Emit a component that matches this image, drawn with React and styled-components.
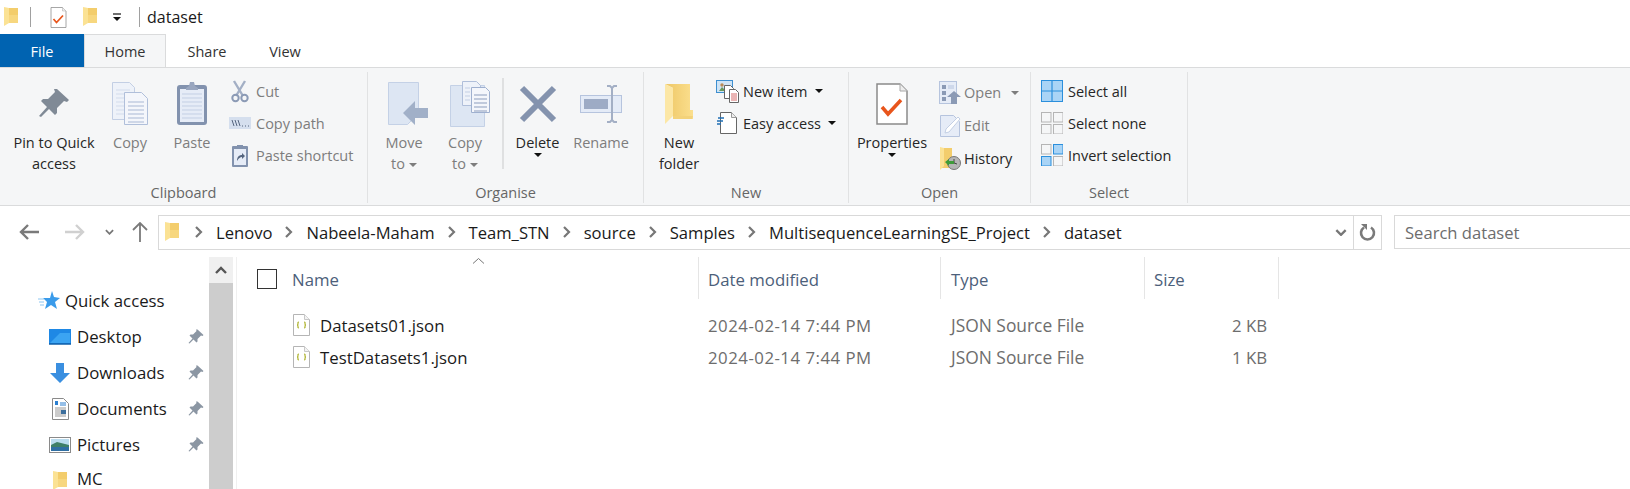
import React from "react"
import styled, { createGlobalStyle } from "styled-components"

const Global = createGlobalStyle`
  html, body { margin: 0; padding: 0; background: #fff; }
  body { font-family: "Open Sans", "Noto Sans", sans-serif; color: #1a1a1a; }
`

const Page = styled.div`
  width: 1630px;
  height: 489px;
  overflow: hidden;
  display: flex;
  flex-direction: column;
`

/* title bar */
const TitleBar = styled.div`
  height: 34px;
  display: flex;
  align-items: center;
  padding-left: 4px;
  svg { flex: none; }
`
const TitleSep = styled.span`
  width: 1px;
  height: 20px;
  background: #a0a0a0;
  margin: 0 ${(p) => p.$right}px 0 ${(p) => p.$left}px;
`
const TitleText = styled.span`
  font-size: 16px;
  color: #1a1a1a;
`
const QuickSlot = styled.span`
  display: flex;
  margin-right: ${(p) => p.$right}px;
`
const Spacer = styled.span`
  flex: none;
  width: ${(p) => p.$w}px;
`

/* tabs */
const TabRow = styled.div`
  height: 34px;
  display: flex;
  box-sizing: border-box;
`
const Tab = styled.div`
  width: ${(p) => p.$w}px;
  box-sizing: border-box;
  display: flex;
  align-items: center;
  justify-content: center;
  font-size: 14.5px;
  color: #333;
`
const FileTab = styled(Tab)`
  background: #0063b1;
  color: #fff;
`
const ActiveTab = styled(Tab)`
  background: #f5f6f7;
  border: 1px solid #dadbdc;
  border-bottom: none;
`

/* ribbon */
const Ribbon = styled.div`
  height: 139px;
  box-sizing: border-box;
  flex: none;
  display: flex;
  background: #f5f6f7;
  border-top: 1px solid #dadbdc;
  border-bottom: 1px solid #dadbdc;
  margin-top: -1px;
`
const RibbonSep = styled.div`
  width: 1px;
  background: #e1e2e3;
  margin: 4px 0 2px;
`
const Group = styled.div`
  width: ${(p) => p.$w}px;
  display: flex;
  flex-direction: column;
`
const GroupBody = styled.div`
  height: 106px;
  box-sizing: content-box;
  padding: 7px 0 0 ${(p) => p.$pad || 0}px;
  margin-bottom: -1px;
  display: flex;
`
const GroupLabel = styled.div`
  font-size: 14.5px;
  line-height: 20px;
  margin-top: 3px;
  text-align: center;
  color: #666;
`
const LargeButton = styled.div`
  width: ${(p) => p.$w}px;
  flex: none;
  display: flex;
  flex-direction: column;
  align-items: center;
  font-size: 14.5px;
  line-height: 21px;
  color: ${(p) => (p.$off ? "#7d7d7d" : "#262626")};
`
const LargeIcon = styled.div`
  height: 57px;
  display: flex;
  align-items: center;
  justify-content: center;
`
const Caret = styled.span`
  display: inline-block;
  width: 0;
  height: 0;
  border-left: 4px solid transparent;
  border-right: 4px solid transparent;
  border-top: 4px solid ${(p) => (p.$off ? "#7d7d7d" : "#111")};
  vertical-align: middle;
  margin-left: ${(p) => p.$ml || 0}px;
`
const InnerSep = styled.div`
  width: 2px;
  height: 91px;
  margin-top: 3px;
  flex: none;
  background: #dfe0e1;
`
const SmallColumn = styled.div`
  display: flex;
  flex-direction: column;
  margin-left: ${(p) => p.$ml || 0}px;
  margin-top: ${(p) => p.$mt || 0}px;
`
const SmallButton = styled.div`
  height: ${(p) => p.$h || 32}px;
  display: flex;
  align-items: center;
  gap: ${(p) => p.$gap ?? 4}px;
  font-size: 14.5px;
  white-space: nowrap;
  color: ${(p) => (p.$off ? "#7d7d7d" : "#262626")};
`
const SmallIcon = styled.span`
  width: 24px;
  display: flex;
  justify-content: center;
`

/* address row */
const AddressRow = styled.div`
  height: 51px;
  flex: none;
  display: flex;
  align-items: center;
  padding-top: 1px;
  box-sizing: border-box;
`
const NavButtons = styled.div`
  width: 158px;
  flex: none;
  display: flex;
  align-items: center;
  padding-left: 19px;
  box-sizing: border-box;
`
const AddressBox = styled.div`
  width: 1224px;
  height: 35px;
  box-sizing: border-box;
  border: 1px solid #d9d9d9;
  display: flex;
  align-items: center;
  padding-left: 6px;
`
const Crumbs = styled.div`
  flex: 1;
  display: flex;
  align-items: center;
  gap: 12px;
  font-size: 16.6px;
  color: #1a1a1a;
  white-space: nowrap;
`
const AddressEnd = styled.div`
  width: 27px;
  height: 100%;
  display: flex;
  align-items: center;
  justify-content: center;
  border-left: 1px solid #d9d9d9;
`
const SearchBox = styled.div`
  margin-left: 12px;
  flex: 1;
  height: 34px;
  box-sizing: border-box;
  border: 1px solid #d9d9d9;
  border-right: none;
  display: flex;
  align-items: center;
  padding-left: 10px;
  font-size: 16.6px;
  color: #6d6d6d;
`

/* content */
const Main = styled.div`
  flex: 1;
  display: flex;
  min-height: 0;
`
const Nav = styled.div`
  width: 209px;
  flex: none;
  padding-top: 26px;
  box-sizing: border-box;
`
const NavRow = styled.div`
  height: 36px;
  display: flex;
  align-items: center;
  padding-left: ${(p) => p.$indent}px;
  font-size: 16.8px;
  line-height: 16px;
  color: #1a1a1a;
`
const NavLastRow = styled(NavRow)`
  height: 24px;
  align-items: flex-start;
  padding-top: 8px;
  box-sizing: border-box;
`
const NavIcon = styled.span`
  width: 22px;
  display: flex;
  justify-content: center;
  margin-right: ${(p) => p.$gap}px;
`
const NavPin = styled.span`
  margin-left: auto;
  margin-right: 5px;
  display: flex;
`
const ScrollBar = styled.div`
  width: 24px;
  flex: none;
  display: flex;
  flex-direction: column;
  margin-right: 3px;
`
const ScrollUp = styled.div`
  height: 26px;
  background: #f0f0f0;
  display: flex;
  align-items: center;
  justify-content: center;
`
const ScrollThumb = styled.div`
  flex: 1;
  background: #cdcdcd;
`
const ListPane = styled.div`
  flex: 1;
  border-left: 1px solid #f0f0f0;
`
const ListRow = styled.div`
  display: flex;
  height: ${(p) => p.$h}px;
`
const Rows = styled.div`
  margin-top: 10px;
`
const Cell = styled.div`
  width: ${(p) => p.$w}px;
  flex: none;
  box-sizing: border-box;
  display: flex;
  align-items: center;
  padding-left: 9px;
  font-size: 16.8px;
  white-space: nowrap;
  color: #6d6d6d;
`
const DateCell = styled(Cell)`
  letter-spacing: 0.5px;
`
const TypeCell = styled(Cell)`
  padding-left: 10px;
  font-size: 17.4px;
`
const HeadCell = styled(Cell)`
  position: relative;
  padding-top: 2px;
  color: #4c607a;
  border-right: 1px solid #e5e5e5;
`
const TypeHead = styled(HeadCell)`
  padding-left: 10px;
`
const NameHead = styled(HeadCell)`
  padding-left: 20px;
`
const NameCell = styled(Cell)`
  padding-left: 56px;
  gap: 10px;
  color: #1a1a1a;
`
const SizeCell = styled(Cell)`
  justify-content: flex-end;
  padding-right: 12px;
`
const CheckBox = styled.span`
  width: 20px;
  height: 20px;
  box-sizing: border-box;
  border: 1px solid #333;
  margin-right: 15px;
`
const SortMark = styled.svg`
  position: absolute;
  left: 236px;
  top: 1px;
`

/* icons */
const Folder = ({ w = 14, h = 20 }) => (
  <svg width={w} height={h} viewBox="0 0 14 20">
    <path d="M4 1h10v15H4z" fill="#f3cd6c" />
    <path d="M0 0l5 1v15l-5 3z" fill="#fbe294" />
    <path d="M5 8h9v8H5z" fill="#f7d77f" />
  </svg>
)
const BigFolder = () => (
  <svg width="30" height="42" viewBox="0 0 30 42">
    <defs>
      <linearGradient id="bf" x1="0" y1="0" x2="1" y2="0">
        <stop offset="0" stopColor="#eec766" />
        <stop offset="1" stopColor="#fbdf8e" />
      </linearGradient>
    </defs>
    <path d="M1 1h25v26h3v9H9V5z" fill="url(#bf)" />
    <path d="M1 1l8 4v28l-8 8z" fill="#fce7a6" />
    <path d="M9 33h20l-1 3H9z" fill="#f3d27a" />
  </svg>
)
const CheckDoc = ({ w = 17, h = 21 }) => (
  <svg width={w} height={h} viewBox="0 0 32 42">
    <path d="M1 1h23l7 7v33H1z" fill="#fff" stroke="#8a8a8a" strokeWidth="1.5" />
    <path d="M24 1v7h7" fill="#eee" stroke="#a8a8a8" />
    <path d="M6 24l6 7 13-14" fill="none" stroke="#e8551c" strokeWidth="3.5" />
  </svg>
)
const DropMark = () => (
  <svg width="9" height="9" viewBox="0 0 9 9">
    <path d="M0 1h8" stroke="#111" strokeWidth="1.2" />
    <path d="M0 4h8L4 8z" fill="#111" />
  </svg>
)
const Pin = ({ size = 32, color = "#808a96" }) => (
  <svg width={size} height={size} viewBox="0 0 32 32">
    <path d="M19 1l12 11-2 2-3-1-7 7 0 5-2 2-6-6-8 8-2-1 8-9-6-6 2-2 5 0 7-7-1-3z" fill={color} />
  </svg>
)
const DocLines = ({ x, y, w, n, gap = 4, color = "#b8c6de" }) => (
  <path d={Array.from({ length: n }, (_, i) => `M${x} ${y + i * gap}h${w}`).join("")} stroke={color} strokeWidth="1" />
)
const CopyIcon = () => (
  <svg width="36" height="43" viewBox="0 0 36 43">
    <path d="M.5.5h17l5 5v32H.5z" fill="#eef2f9" stroke="#c3cfe4" />
    <DocLines x={4} y={8} w={14} n={7} color="#d3dcec" />
    <path d="M12.5 10.5h17l6 6v26h-23z" fill="#f4f6fb" stroke="#b0bfda" />
    <DocLines x={16} y={20} w={16} n={6} color="#a9b8d4" />
  </svg>
)
const PasteIcon = () => (
  <svg width="30" height="43" viewBox="0 0 30 43">
    <rect x="0" y="3" width="30" height="40" rx="3" fill="#8292ae" />
    <rect x="3" y="7" width="24" height="33" fill="#e6ecf7" />
    <DocLines x={5} y={12} w={20} n={7} color="#c3cfe4" />
    <path d="M9 6l3-2 1-4h4l1 4 3 2v2H9z" fill="#99a6bf" />
  </svg>
)
const CutIcon = () => (
  <svg width="18" height="23" viewBox="0 0 18 23">
    <path d="M3 1l9 15M14 1L5 16" stroke="#a3afc5" strokeWidth="2.4" />
    <circle cx="4.5" cy="18" r="3.2" fill="none" stroke="#8b9ab5" strokeWidth="2" />
    <circle cx="13.5" cy="18" r="3.2" fill="none" stroke="#8b9ab5" strokeWidth="2" />
  </svg>
)
const CopyPathIcon = () => (
  <svg width="22" height="12" viewBox="0 0 22 12">
    <rect width="22" height="12" fill="#d5dfee" />
    <path d="M3 3l2 6M6 3l2 6M9 3l2 6" stroke="#55657f" strokeWidth="1" />
    <path d="M13 9h1M16 9h1M19 9h1" stroke="#55657f" strokeWidth="1" />
  </svg>
)
const PasteShortcutIcon = () => (
  <svg width="16" height="23" viewBox="0 0 16 23">
    <rect y="2" width="16" height="21" rx="1" fill="#8292ae" />
    <rect x="2" y="5" width="12" height="16" fill="#e6ecf7" />
    <path d="M5 1h6v4H5z" fill="#8292ae" />
    <path d="M5 17c0-4 2-6 5-6V9l3 3-3 3v-2c-2 0-3 1-5 4z" fill="#55657f" />
  </svg>
)
const MoveToIcon = () => (
  <svg width="47" height="44" viewBox="-7 0 47 44">
    <path d="M.5.5h30v31l-11 11H.5z" fill="#dde6f3" stroke="#c4d1e6" />
    <path d="M15 31l12-12v7h13v10H27v7z" fill="#a1b0c8" />
  </svg>
)
const CopyToIcon = () => (
  <svg width="50" height="46" viewBox="-10 0 50 46">
    <path d="M.5 4.5h34v41H.5z" fill="#dde6f3" stroke="#c4d1e6" />
    <path d="M12.5.5h14l4 4v20h-18z" fill="#eef2f9" stroke="#b0bfda" />
    <path d="M21.5 6.5h14l4 4v21h-18z" fill="#f4f6fb" stroke="#9fb0cf" />
    <DocLines x={24} y={14} w={13} n={5} color="#8c9dbd" />
    <DocLines x={15} y={7} w={5} n={4} color="#c3cfe4" />
  </svg>
)
const DeleteIcon = () => (
  <svg width="38" height="38" viewBox="0 0 38 38">
    <path d="M3 3l32 32M35 3L3 35" stroke="#8493ae" strokeWidth="6" />
  </svg>
)
const RenameIcon = () => (
  <svg width="43" height="38" viewBox="0 0 43 38">
    <rect x=".5" y="10.5" width="41" height="17" fill="#e4ebf7" stroke="#b6c4de" />
    <rect x="4" y="14" width="24" height="10" fill="#9dabc5" />
    <path d="M27 1h3l2 2 2-2h3M27 37h3l2-2 2 2h3M32 3v32" fill="none" stroke="#a3afc5" strokeWidth="2" />
  </svg>
)
const NewItemIcon = () => (
  <svg width="23" height="23" viewBox="0 0 23 23">
    <rect x=".5" y=".5" width="16" height="12" fill="#cfe4f6" stroke="#3e8fd0" />
    <path d="M3 11l3-4 4 4z" fill="#6a9a5c" />
    <circle cx="6" cy="5" r="1.7" fill="#b98a55" />
    <path d="M8.5 5.5h6l3 3v10h-9z" fill="#fff" stroke="#666" />
    <path d="M13.5 9.5h6l3 3v10h-9z" fill="#fff" stroke="#666" />
    <DocLines x={15} y={14} w={6} n={4} gap={2} color="#d56a6a" />
  </svg>
)
const EasyAccessIcon = () => (
  <svg width="20" height="22" viewBox="0 0 20 22">
    <path d="M3.5.5h11l5 5v16h-16z" fill="#fff" stroke="#666" />
    <path d="M14.5.5v5h5" fill="#eee" stroke="#999" />
    <path d="M1 6h6M0 9h6M0 12h4" stroke="#1f6fb5" strokeWidth="1.3" />
  </svg>
)
const OpenIcon = () => (
  <svg width="22" height="23" viewBox="0 0 22 23">
    <rect x=".5" y=".5" width="17" height="22" fill="#e6ecf7" stroke="#b6c4de" />
    <path d="M3 4h4v4H3zM3 10h4v4H3zM3 16h4v4H3z" fill="#8b9ab5" />
    <path d="M9 5h6M9 7h6" stroke="#b6c4de" />
    <path d="M15 10l7 6h-4v7h-6v-7H8z" fill="#8b9ab5" />
  </svg>
)
const EditIcon = () => (
  <svg width="21" height="22" viewBox="0 0 21 22">
    <path d="M.5.5h13l6 6v15H.5z" fill="#e6ecf7" stroke="#b6c4de" />
    <path d="M5 18l1-4L18 2l2 2L9 17z" fill="#fff" stroke="#c3cfe4" />
  </svg>
)
const HistoryIcon = () => (
  <svg width="21" height="23" viewBox="0 0 21 23">
    <path d="M2 1h10v20H2z" fill="#f3cd6c" />
    <path d="M0 0l4 1v18l-4 4z" fill="#fbe294" />
    <circle cx="14" cy="16" r="6.5" fill="#b5b5b5" stroke="#777" />
    <path d="M14 12v4l3 1" stroke="#444" fill="none" />
    <path d="M5 15l4-3v2h5v3H9v2z" fill="#3e9b3a" />
  </svg>
)
const GridIcon = ({ on }) => (
  <svg width="22" height="22" viewBox="0 0 22 22">
    {[[0, 0], [12, 0], [0, 12], [12, 12]].map(([x, y], i) => (
      <rect
        key={i}
        x={x + 0.5}
        y={y + 0.5}
        width="9.5"
        height="9.5"
        fill={on[i] ? "#a9d4f6" : "#f5f6f7"}
        stroke={on[i] ? "#2b8fdc" : "#b5b5b5"}
      />
    ))}
  </svg>
)
const SelectAllIcon = () => (
  <svg width="22" height="22" viewBox="0 0 22 22">
    <rect x=".5" y=".5" width="21" height="21" fill="#a9d4f6" stroke="#2b8fdc" />
    <path d="M11 0v22M0 11h22" stroke="#2b8fdc" strokeWidth="1.2" />
  </svg>
)
const BackArrow = () => (
  <svg width="20" height="16" viewBox="0 0 20 16">
    <path d="M9 1L2 8l7 7M2 8h18" fill="none" stroke="#7a7a7a" strokeWidth="2.4" />
  </svg>
)
const ForwardArrow = () => (
  <svg width="20" height="16" viewBox="0 0 20 16">
    <path d="M11 1l7 7-7 7M18 8H0" fill="none" stroke="#d0d0d0" strokeWidth="2.4" />
  </svg>
)
const UpArrow = () => (
  <svg width="16" height="20" viewBox="0 0 16 20">
    <path d="M1 8l7-7 7 7M8 1v19" fill="none" stroke="#7a7a7a" strokeWidth="1.8" />
  </svg>
)
const Chevron = ({ w = 10, h = 6 }) => (
  <svg width={w} height={h} viewBox="0 0 10 6">
    <path d="M1 1l4 4 4-4" fill="none" stroke="#777" strokeWidth="2" />
  </svg>
)
const ChevronUp = () => (
  <svg width="12" height="8" viewBox="0 0 12 8">
    <path d="M1 7l5-5 5 5" fill="none" stroke="#555" strokeWidth="2.4" />
  </svg>
)
const CrumbChevron = () => (
  <svg width="10" height="12" viewBox="0 0 10 12">
    <path d="M2 1l5 5-5 5" fill="none" stroke="#777" strokeWidth="2.2" />
  </svg>
)
const Refresh = () => (
  <svg width="17" height="18" viewBox="0 0 17 18">
    <path d="M5 4.5a6.5 6.5 0 1 0 7 0" fill="none" stroke="#7a7a7a" strokeWidth="2.6" />
    <path d="M2 1h6v6z" fill="#7a7a7a" />
  </svg>
)
const Star = () => (
  <svg width="22" height="20" viewBox="0 0 22 20">
    <path d="M14 0l2 6 6 1-5 4 2 7-6-4-6 4 2-7-4-4h7z" fill="#3a9bea" />
    <path d="M0 8h6M1 11h5M2 14h4" stroke="#8cc6f2" strokeWidth="1" />
  </svg>
)
const Desktop = () => (
  <svg width="22" height="16" viewBox="0 0 22 16">
    <rect width="22" height="15" fill="#1e88e5" />
    <path d="M1 14L11 4h10v10z" fill="#3ba4f2" />
    <path d="M0 15h22" stroke="#0f5fa8" strokeWidth="1.5" />
  </svg>
)
const Downloads = () => (
  <svg width="20" height="20" viewBox="0 0 20 20">
    <path d="M6 0h8v10h6L10 20 0 10h6z" fill="#3a8fe0" />
  </svg>
)
const Documents = () => (
  <svg width="17" height="22" viewBox="0 0 17 22">
    <path d="M.5.5h11l5 5v16H.5z" fill="#fff" stroke="#8a8a8a" />
    <path d="M3 3h3v4H3z" fill="#2b7fd0" />
    <DocLines x={8} y={5} w={6} n={2} gap={2} color="#2b7fd0" />
    <DocLines x={3} y={10} w={11} n={5} gap={2} color="#999" />
    <rect x="9" y="12" width="5" height="4" fill="#3c6e9c" />
  </svg>
)
const Pictures = () => (
  <svg width="22" height="16" viewBox="0 0 22 16">
    <rect x=".5" y=".5" width="21" height="15" fill="#fff" stroke="#8a8a8a" />
    <rect x="2" y="2" width="18" height="6" fill="#b9dcef" />
    <path d="M2 8l6-3 12 3v2H2z" fill="#3e7f68" />
    <rect x="2" y="10" width="18" height="4" fill="#2f6fa3" />
  </svg>
)
const JsonFile = () => (
  <svg width="17" height="22" viewBox="0 0 17 22">
    <path d="M.5.5h11l5 5v16H.5z" fill="#fff" stroke="#b5b5b5" />
    <path d="M11.5.5v5h5" fill="#f3f3f3" stroke="#c8c8c8" />
    <path d="M6 8c-1.5 0-1 1-1 2s-1 1-1 1 1 0 1 1-.5 2 1 2M11 8c1.5 0 1 1 1 2s1 1 1 1-1 0-1 1 .5 2-1 2" fill="none" stroke="#aeb32e" strokeWidth="1.2" />
  </svg>
)

const crumbs = ["Lenovo", "Nabeela-Maham", "Team_STN", "source", "Samples", "MultisequenceLearningSE_Project", "dataset"]

const places = [
  { name: "Desktop", icon: <Desktop /> },
  { name: "Downloads", icon: <Downloads /> },
  { name: "Documents", icon: <Documents /> },
  { name: "Pictures", icon: <Pictures /> },
]

const files = [
  { name: "Datasets01.json", date: "2024-02-14 7:44 PM", type: "JSON Source File", size: "2 KB" },
  { name: "TestDatasets1.json", date: "2024-02-14 7:44 PM", type: "JSON Source File", size: "1 KB" },
]

const Small = ({ icon, off, h, gap, children }) => (
  <SmallButton $off={off} $h={h} $gap={gap}>
    <SmallIcon>{icon}</SmallIcon>
    {children}
  </SmallButton>
)

const Large = ({ w, icon, off, lines, caret }) => (
  <LargeButton $w={w} $off={off}>
    <LargeIcon>{icon}</LargeIcon>
    {lines.map((l) => (
      <div key={l}>{l}</div>
    ))}
    {caret && <Caret />}
  </LargeButton>
)

const App = () => {
  return (
    <Page>
      <Global />
      <TitleBar>
        <QuickSlot $right={0}><Folder /></QuickSlot>
        <TitleSep $left={12} $right={19} />
        <QuickSlot $right={16}><CheckDoc /></QuickSlot>
        <QuickSlot $right={16}><Folder /></QuickSlot>
        <QuickSlot $right={17}><DropMark /></QuickSlot>
        <TitleSep $left={0} $right={7} />
        <TitleText>dataset</TitleText>
      </TitleBar>
      <TabRow>
        <FileTab $w={84}>File</FileTab>
        <ActiveTab $w={82}>Home</ActiveTab>
        <Tab $w={82}>Share</Tab>
        <Tab $w={74}>View</Tab>
      </TabRow>
      <Ribbon>
        <Group $w={367}>
          <GroupBody $pad={8}>
            <Large w={92} icon={<Pin />} lines={["Pin to Quick", "access"]} />
            <Large w={60} off icon={<CopyIcon />} lines={["Copy"]} />
            <Large w={64} off icon={<PasteIcon />} lines={["Paste"]} />
            <SmallColumn $ml={4}>
              <Small off icon={<CutIcon />}>Cut</Small>
              <Small off icon={<CopyPathIcon />}>Copy path</Small>
              <Small off icon={<PasteShortcutIcon />}>Paste shortcut</Small>
            </SmallColumn>
          </GroupBody>
          <GroupLabel>Clipboard</GroupLabel>
        </Group>
        <RibbonSep />
        <Group $w={275}>
          <GroupBody $pad={12}>
            <LargeButton $w={48} $off>
              <LargeIcon><MoveToIcon /></LargeIcon>
              <div>Move</div>
              <div>to<Caret $off $ml={4} /></div>
            </LargeButton>
            <LargeButton $w={74} $off>
              <LargeIcon><CopyToIcon /></LargeIcon>
              <div>Copy</div>
              <div>to<Caret $off $ml={4} /></div>
            </LargeButton>
            <InnerSep />
            <Large w={67} icon={<DeleteIcon />} lines={["Delete"]} caret />
            <Large w={60} off icon={<RenameIcon />} lines={["Rename"]} />
          </GroupBody>
          <GroupLabel>Organise</GroupLabel>
        </Group>
        <RibbonSep />
        <Group $w={204}>
          <GroupBody>
            <Large w={70} icon={<BigFolder />} lines={["New", "folder"]} />
            <SmallColumn $ml={1}>
              <Small icon={<NewItemIcon />}>New item<Caret $ml={4} /></Small>
              <Small icon={<EasyAccessIcon />}>Easy access<Caret $ml={3} /></Small>
            </SmallColumn>
          </GroupBody>
          <GroupLabel>New</GroupLabel>
        </Group>
        <RibbonSep />
        <Group $w={181}>
          <GroupBody>
            <Large w={86} icon={<CheckDoc w={32} h={42} />} lines={["Properties"]} caret />
            <SmallColumn $ml={3} $mt={1}>
              <Small off h={33} gap={2} icon={<OpenIcon />}>Open<Caret $off $ml={8} /></Small>
              <Small off h={33} gap={2} icon={<EditIcon />}>Edit</Small>
              <Small h={33} gap={2} icon={<HistoryIcon />}>History</Small>
            </SmallColumn>
          </GroupBody>
          <GroupLabel>Open</GroupLabel>
        </Group>
        <RibbonSep />
        <Group $w={156}>
          <GroupBody $pad={9}>
            <SmallColumn>
              <Small icon={<SelectAllIcon />}>Select all</Small>
              <Small icon={<GridIcon on={[false, false, false, false]} />}>Select none</Small>
              <Small icon={<GridIcon on={[false, true, true, false]} />}>Invert selection</Small>
            </SmallColumn>
          </GroupBody>
          <GroupLabel>Select</GroupLabel>
        </Group>
        <RibbonSep />
      </Ribbon>
      <AddressRow>
        <NavButtons>
          <BackArrow />
          <Spacer $w={26} />
          <ForwardArrow />
          <Spacer $w={20} />
          <Chevron w={9} h={6} />
          <Spacer $w={18} />
          <UpArrow />
        </NavButtons>
        <AddressBox>
          <Crumbs>
            <QuickSlot $right={3}><Folder /></QuickSlot>
            {crumbs.map((c) => (
              <React.Fragment key={c}>
                <CrumbChevron />
                <span>{c}</span>
              </React.Fragment>
            ))}
          </Crumbs>
          <Chevron w={12} h={7} />
          <Spacer $w={6} />
          <AddressEnd><Refresh /></AddressEnd>
        </AddressBox>
        <SearchBox>Search dataset</SearchBox>
      </AddressRow>
      <Main>
        <Nav>
          <NavRow $indent={38}>
            <NavIcon $gap={5}><Star /></NavIcon>
            Quick access
          </NavRow>
          {places.map((p) => (
            <NavRow key={p.name} $indent={49}>
              <NavIcon $gap={6}>{p.icon}</NavIcon>
              {p.name}
              <NavPin><Pin size={16} color="#8b96a3" /></NavPin>
            </NavRow>
          ))}
          <NavLastRow $indent={49}>
            <NavIcon $gap={6}><Folder /></NavIcon>
            MC
          </NavLastRow>
        </Nav>
        <ScrollBar>
          <ScrollUp><ChevronUp /></ScrollUp>
          <ScrollThumb />
        </ScrollBar>
        <ListPane>
          <ListRow $h={42}>
            <NameHead $w={462}>
              <CheckBox />
              Name
              <SortMark width="11" height="6" viewBox="0 0 11 6">
                <path d="M0 5.5l5.5-5 5.5 5" fill="none" stroke="#777" />
              </SortMark>
            </NameHead>
            <HeadCell $w={242}>Date modified</HeadCell>
            <TypeHead $w={204}>Type</TypeHead>
            <HeadCell $w={134}>Size</HeadCell>
          </ListRow>
          <Rows>
            {files.map((f) => (
              <ListRow key={f.name} $h={32}>
                <NameCell $w={462}>
                  <JsonFile />
                  {f.name}
                </NameCell>
                <DateCell $w={242}>{f.date}</DateCell>
                <TypeCell $w={204}>{f.type}</TypeCell>
                <SizeCell $w={134}>{f.size}</SizeCell>
              </ListRow>
            ))}
          </Rows>
        </ListPane>
      </Main>
    </Page>
  )
}

export default App
